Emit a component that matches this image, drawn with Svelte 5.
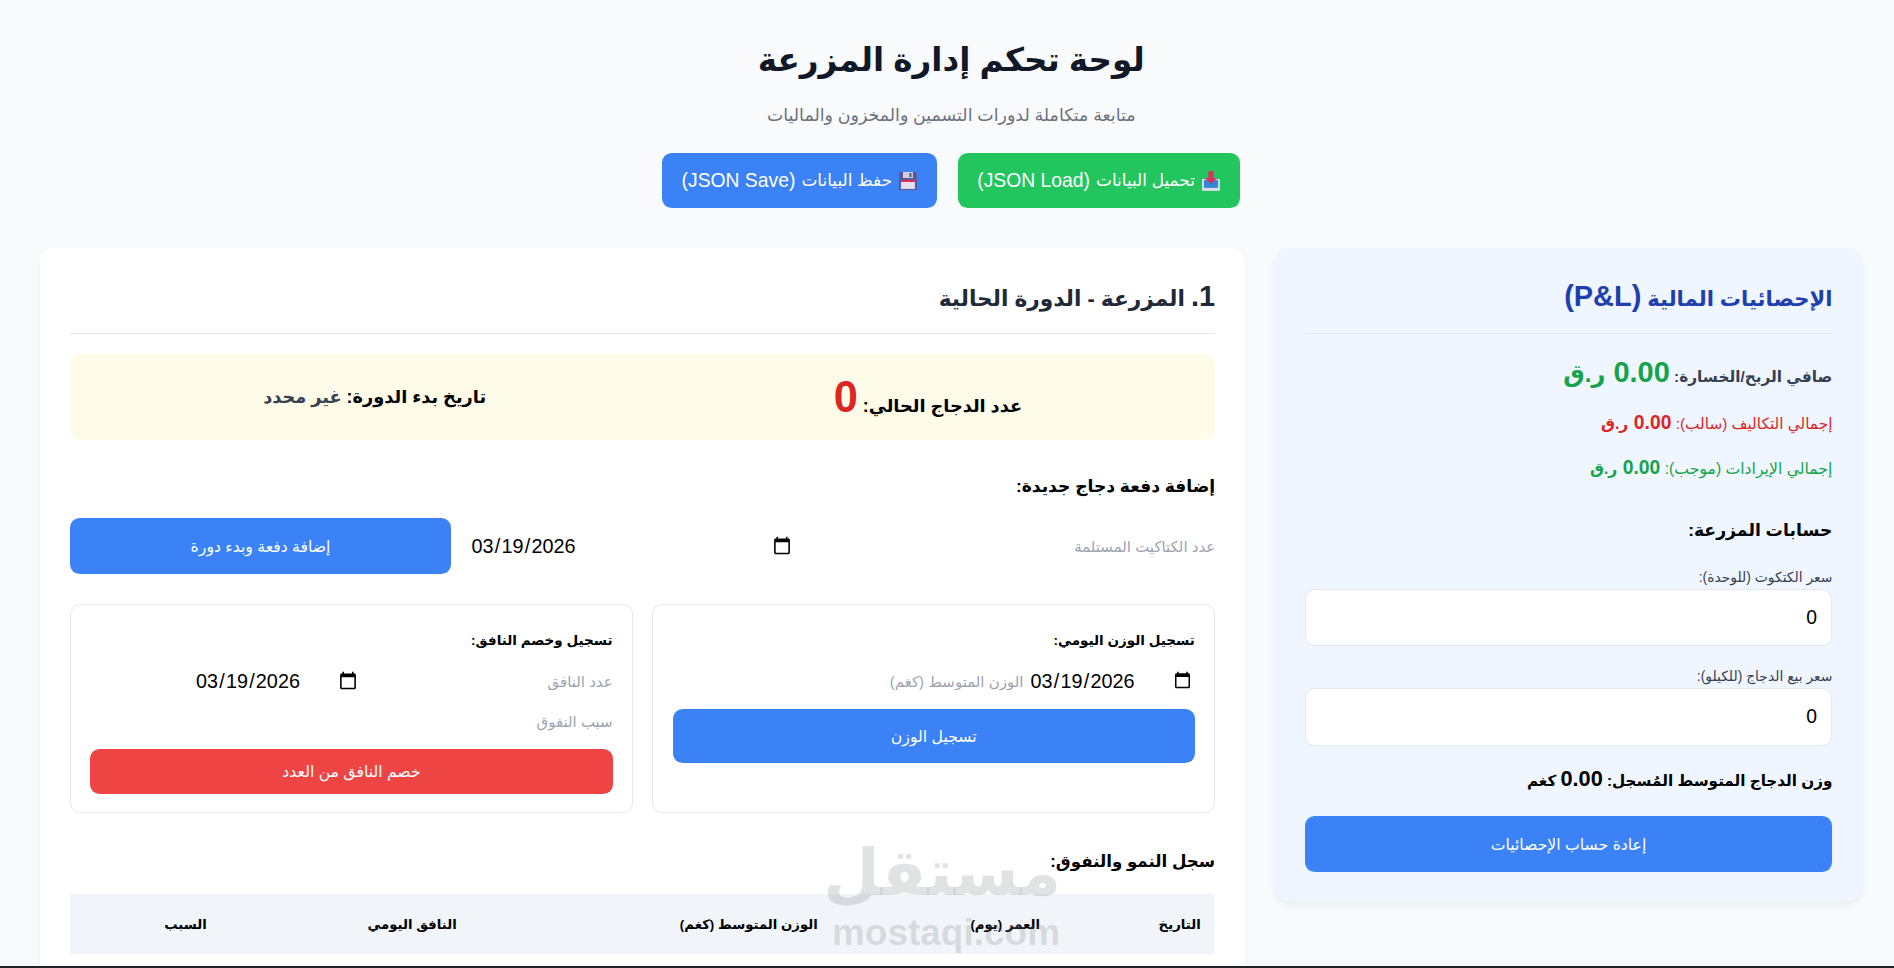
<script lang="ts">
  const today = '2026-03-19';
  const columns = ['التاريخ', 'العمر (يوم)', 'الوزن المتوسط (كغم)', 'النافق اليومي', 'السبب'];
</script>

<div class="page" dir="rtl">
  <div class="zoomed">
    <header class="top">
      <h1>لوحة تحكم إدارة المزرعة</h1>
      <p class="sub">متابعة متكاملة لدورات التسمين والمخزون والماليات</p>
      <div class="top-actions">
        <button class="btn green" type="button">
          <svg class="emoji" viewBox="0 0 20 20" aria-hidden="true">
            <path d="M1 8h18v12H1z" fill="#d5dbe3" />
            <path d="M3 9h14v8H3z" fill="#2f86d8" />
            <path d="M3 17h14v2H3z" fill="#e4d9ea" />
            <path d="M7.500 0h5v7H16l-6 6-6-6h3.500z" fill="#d8315b" />
          </svg>
          تحميل البيانات <span class="lat">(JSON Load)</span>
        </button>
        <button class="btn blue" type="button">
          <svg class="emoji" viewBox="0 0 20 20" aria-hidden="true">
            <path d="M1 1h16l2 2v16H1z" fill="#5a5898" />
            <path d="M5 1h10v6H5z" fill="#cdd0dc" />
            <path d="M11.500 2h2v4h-2z" fill="#4b4f7a" />
            <path d="M3 9h14v9H3z" fill="#e4dff0" />
            <path d="M3 9h14v2H3z" fill="#e0264f" />
          </svg>
          حفظ البيانات <span class="lat">(JSON Save)</span>
        </button>
      </div>
    </header>

    <div class="layout">
      <aside class="card stats">
        <h2 class="stats-title">الإحصائيات المالية <span class="lat">(P&amp;L)</span></h2>
        <p class="net">صافي الربح/الخسارة: <b>0.00 <span class="cur">ر.ق</span></b></p>
        <p class="line red">إجمالي التكاليف (سالب): <b>0.00 <span class="cur">ر.ق</span></b></p>
        <p class="line green-text">إجمالي الإيرادات (موجب): <b>0.00 <span class="cur">ر.ق</span></b></p>

        <h3 class="accounts">حسابات المزرعة:</h3>
        <label class="field">
          <span>سعر الكتكوت (للوحدة):</span>
          <input type="number" value="0" />
        </label>
        <label class="field">
          <span>سعر بيع الدجاج (للكيلو):</span>
          <input type="number" value="0" />
        </label>
        <p class="avg">وزن الدجاج المتوسط المُسجل: <span class="lat">0.00</span> كغم</p>
        <button class="btn blue wide" type="button">إعادة حساب الإحصائيات</button>
      </aside>

      <main class="card farm">
        <h2 class="farm-title"><span class="lat">1.</span> المزرعة - الدورة الحالية</h2>

        <div class="summary">
          <div class="summary-item">عدد الدجاج الحالي: <span class="count">0</span></div>
          <div class="summary-item">تاريخ بدء الدورة: <span class="muted">غير محدد</span></div>
        </div>

        <h3 class="section">إضافة دفعة دجاج جديدة:</h3>
        <div class="batch-row">
          <input class="bare" type="number" placeholder="عدد الكتاكيت المستلمة" />
          <input class="bare date" type="date" value={today} />
          <button class="btn blue batch-btn" type="button">إضافة دفعة وبدء دورة</button>
        </div>

        <div class="logs">
          <section class="log">
            <h4>تسجيل الوزن اليومي:</h4>
            <div class="log-row">
              <input class="bare date small" type="date" value={today} />
              <input class="bare grow" type="number" placeholder="الوزن المتوسط (كغم)" />
            </div>
            <button class="btn blue wide" type="button">تسجيل الوزن</button>
          </section>
          <section class="log">
            <h4>تسجيل وخصم النافق:</h4>
            <div class="log-row">
              <input class="bare count-input" type="number" placeholder="عدد النافق" />
              <input class="bare date small" type="date" value={today} />
            </div>
            <input class="bare reason" type="text" placeholder="سبب النفوق" />
            <button class="btn red-btn wide" type="button">خصم النافق من العدد</button>
          </section>
        </div>

        <h3 class="section history">سجل النمو والنفوق:</h3>
        <table>
          <thead>
            <tr>
              {#each columns as col}
                <th>{col}</th>
              {/each}
            </tr>
          </thead>
        </table>
      </main>
    </div>
  </div>

  <div class="watermark" aria-hidden="true">
    <div class="wm-ar">مستقل</div>
    <div class="wm-en">mostaqi.com</div>
  </div>
  <div class="edge"></div>
</div>

<style>
  :global(html), :global(body) {
    margin: 0;
    overflow: hidden;
    background: #f9fafb;
  }
  .page {
    height: 968px;
    overflow: hidden;
    position: relative;
    font-family: "Liberation Sans", "DejaVu Sans", sans-serif;
    color: #111827;
  }
  /* reference is an upscaled 1568px capture, so lay out in those units */
  .zoomed {
    zoom: 1.2079;
    padding: 0 26px 0 33px;
  }
  .top {
    text-align: center;
    padding-top: 30px;
  }
  h1 {
    margin: 0;
    font-size: 27px;
    line-height: 40px;
    font-weight: 700;
    color: #111827;
  }
  .sub {
    margin: 14px 0 0;
    font-size: 14.4px;
    line-height: 24px;
    color: #6b7280;
  }
  .top-actions {
    display: flex;
    justify-content: center;
    gap: 17px;
    margin-top: 19px;
  }
  .btn {
    border: 0;
    border-radius: 8px;
    color: #fff;
    font: inherit;
    font-size: 13px;
    height: 46px;
    padding: 0 16px;
    display: inline-flex;
    align-items: center;
    justify-content: center;
    gap: 5px;
    cursor: pointer;
  }
  .top-actions .btn { height: 45px; font-size: 14px; }
  .lat { font-size: 16px; }
  .green { background: #22c55e; }
  .blue { background: #3b82f6; }
  .red-btn { background: #ef4444; height: 37px; }
  .wide { width: 100%; }
  .emoji { width: 16.500px; height: 16.500px; flex: none; }

  .layout {
    display: grid;
    grid-template-columns: repeat(3, 1fr);
    gap: 24px;
    margin-top: 33px;
    align-items: start;
  }
  .card {
    border-radius: 12px;
    box-shadow: 0 4px 6px -1px rgba(0, 0, 0, 0.05);
    padding: 24px 25px;
  }
  .stats { background: #eff6ff; }
  .farm { background: #fff; grid-column: span 2; }

  .stats-title, .farm-title {
    margin: 0 0 17px;
    line-height: 32px;
    padding-bottom: 12px;
    border-bottom: 1px solid #e5e7eb;
  }
  .stats-title { color: #1e40af; font-size: 17.500px; margin-bottom: 14px; }
  .stats-title .lat, .farm-title .lat { font-size: 24px; }
  .farm-title { color: #1f2937; font-size: 18px; }

  .net {
    margin: 0;
    font-size: 12.700px;
    font-weight: 700;
    color: #374151;
    line-height: 36px;
  }
  .net b { font-size: 24px; color: #16a34a; }
  .net .cur { font-size: 20px; }
  .line { margin: 7px 0 0; font-size: 12.700px; line-height: 27px; }
  .line b { font-size: 16px; }
  .line .cur { font-size: 13px; }
  .red { color: #dc2626; }
  .green-text { color: #16a34a; font-size: 13px; margin-top: 10px; }
  .accounts { margin: 23px 0 0; font-size: 14.300px; line-height: 28px; color: #000; }
  .field { display: block; margin-top: 16px; }
  .field span { display: block; font-size: 11.500px; line-height: 18px; color: #374151; }
  .field input {
    display: block;
    box-sizing: border-box;
    width: 100%;
    height: 48px;
    margin-bottom: 6px;
    padding: 0 12px;
    background: #fff;
    border: 1px solid #e5e7eb;
    border-radius: 8px;
    font: inherit;
    font-size: 16px;
    text-align: right;
    color: #000;
  }
  .avg { margin: 16px 0 17px; font-size: 12.600px; font-weight: 700; line-height: 24px; color: #000; }
  .avg .lat { font-size: 18px; }

  .summary {
    display: flex;
    justify-content: space-around;
    align-items: center;
    background: #fefce8;
    border-radius: 8px;
    height: 71px;
    padding: 0 16px;
    font-size: 14.700px;
    font-weight: 700;
    color: #000;
  }
  .count { font-size: 36px; color: #dc2626; }
  .muted { color: #374151; }
  .section { margin: 25px 0 0; font-size: 14.200px; line-height: 28px; color: #000; }

  .bare {
    border: 0;
    outline: 0;
    padding: 0;
    background: transparent;
    font: inherit;
    font-size: 12.400px;
    color: #000;
    min-width: 0;
  }
  .bare::placeholder { color: #9ca3af; }
  .date { font-size: 16.400px; direction: ltr; }

  .batch-row {
    display: grid;
    grid-template-columns: 332fr 268fr 315fr;
    gap: 16px;
    margin-top: 12px;
    align-items: center;
  }
  .batch-btn { width: 100%; }

  .logs {
    display: grid;
    grid-template-columns: 1fr 1fr;
    gap: 16px;
    margin-top: 25px;
  }
  .log {
    border: 1px solid #e5e7eb;
    border-radius: 8px;
    padding: 16px;
    height: 173px;
    box-sizing: border-box;
  }
  .log h4 { margin: 2px 0 0; font-size: 11.200px; line-height: 24px; color: #000; }
  .log-row { display: flex; gap: 5px; margin-top: 9px; height: 24px; align-items: center; }
  .grow { flex: 1; }
  .count-input { flex: 0 0 204px; width: 204px; }
  .small { flex: 0 0 137px; width: 137px; }
  .log .wide { margin-top: 11px; }
  .log .blue { height: 45px; }
  .reason { display: block; width: 100%; margin-top: 9px; height: 24px; }

  .history { margin-top: 26px; font-size: 13.800px; }
  table {
    width: 100%;
    margin-top: 13px;
    border-collapse: collapse;
    table-layout: fixed;
  }
  th {
    background: #f1f5f9;
    height: 50px;
    padding: 0 12px;
    text-align: right;
    font-size: 11px;
    color: #000;
  }
  th:nth-child(1) { width: 109px; }
  th:nth-child(2) { width: 160px; }
  th:nth-child(3) { width: 275px; }
  th:nth-child(4) { width: 183px; }

  .watermark {
    position: absolute;
    left: 831px;
    top: 832px;
    width: 230px;
    text-align: center;
    color: rgba(120, 125, 130, 0.22);
    font-weight: 700;
    pointer-events: none;
  }
  .wm-ar { font-size: 65px; line-height: 82px; }
  .wm-en { font-size: 37px; line-height: 38px; direction: ltr; }
  .edge {
    position: absolute;
    left: 0;
    right: 0;
    bottom: 0;
    height: 2px;
    background: #1f2328;
  }
</style>
